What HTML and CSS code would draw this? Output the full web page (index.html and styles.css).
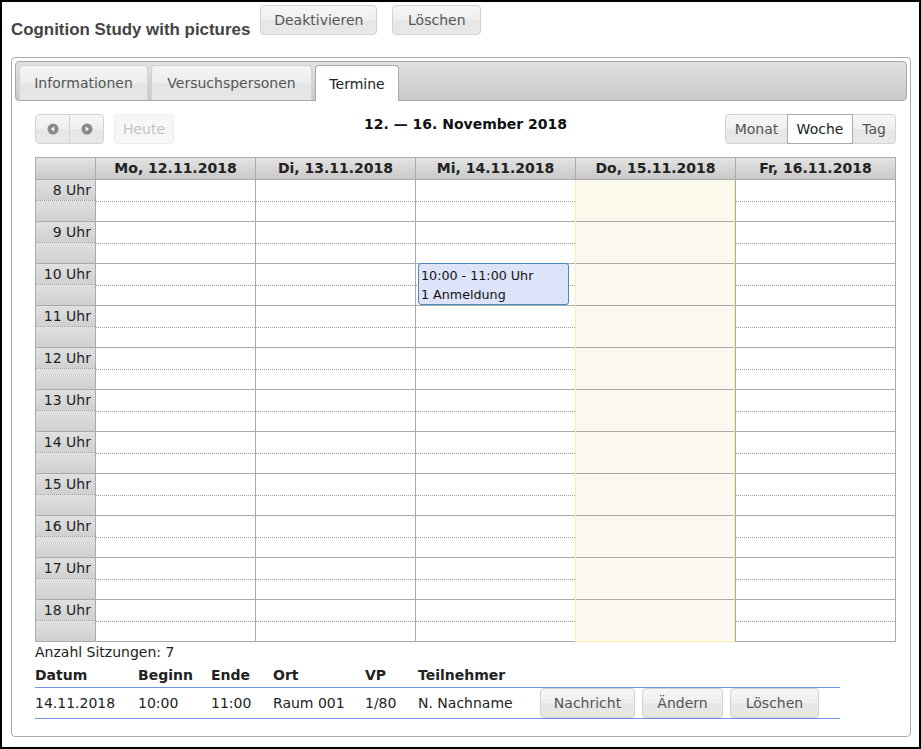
FILE: index.html
```html
<!DOCTYPE html>
<html lang="de">
<head>
<meta charset="utf-8">
<title>Cognition Study with pictures</title>
<link rel="stylesheet" href="styles.css">
</head>
<body>
<div class="frame">
  <header class="page-header">
    <h1 class="study-title">Cognition Study with pictures</h1>
    <div class="header-actions">
      <button class="btn b-deact">Deaktivieren</button>
      <button class="btn b-del">Löschen</button>
    </div>
  </header>

  <div class="tabs">
    <ul class="tab-nav">
      <li class="tab t-info">Informationen</li>
      <li class="tab t-vp">Versuchspersonen</li>
      <li class="tab t-term active">Termine</li>
    </ul>

    <div class="tab-panel">
      <div class="cal-toolbar">
        <div class="tb-left">
          <div class="btn-group">
            <button class="cbtn icon-btn" aria-label="zurück">
              <svg width="12" height="12" viewBox="0 0 12 12"><circle cx="6" cy="6" r="5.5" fill="#8a8a8a"/><path d="M7.3 3.4 L4 6 L7.3 8.6 Z" fill="#fff"/></svg>
            </button>
            <button class="cbtn icon-btn" aria-label="vor">
              <svg width="12" height="12" viewBox="0 0 12 12"><circle cx="6" cy="6" r="5.5" fill="#8a8a8a"/><path d="M4.7 3.4 L8 6 L4.7 8.6 Z" fill="#fff"/></svg>
            </button>
          </div>
          <button class="cbtn disabled">Heute</button>
        </div>
        <h2 class="cal-title">12. — 16. November 2018</h2>
        <div class="tb-right">
          <div class="btn-group">
            <button class="cbtn v-month">Monat</button>
            <button class="cbtn v-week active">Woche</button>
            <button class="cbtn v-day">Tag</button>
          </div>
        </div>
      </div>

      <div class="cal">
        <div class="cal-head">
          <div class="axis-head"></div>
          <div class="day-head">Mo, 12.11.2018</div>
          <div class="day-head">Di, 13.11.2018</div>
          <div class="day-head">Mi, 14.11.2018</div>
          <div class="day-head">Do, 15.11.2018</div>
          <div class="day-head">Fr, 16.11.2018</div>
        </div>
        <div class="cal-body">
          <div class="axis-col">
            <div class="axis-hour"><div class="lbl">8 Uhr</div><div class="blank"></div></div>
            <div class="axis-hour"><div class="lbl">9 Uhr</div><div class="blank"></div></div>
            <div class="axis-hour"><div class="lbl">10 Uhr</div><div class="blank"></div></div>
            <div class="axis-hour"><div class="lbl">11 Uhr</div><div class="blank"></div></div>
            <div class="axis-hour"><div class="lbl">12 Uhr</div><div class="blank"></div></div>
            <div class="axis-hour"><div class="lbl">13 Uhr</div><div class="blank"></div></div>
            <div class="axis-hour"><div class="lbl">14 Uhr</div><div class="blank"></div></div>
            <div class="axis-hour"><div class="lbl">15 Uhr</div><div class="blank"></div></div>
            <div class="axis-hour"><div class="lbl">16 Uhr</div><div class="blank"></div></div>
            <div class="axis-hour"><div class="lbl">17 Uhr</div><div class="blank"></div></div>
            <div class="axis-hour"><div class="lbl">18 Uhr</div><div class="blank"></div></div>
          </div>
          <div class="day-col">
            <div class="hr"></div><div class="hr"></div><div class="hr"></div><div class="hr"></div><div class="hr"></div><div class="hr"></div><div class="hr"></div><div class="hr"></div><div class="hr"></div><div class="hr"></div><div class="hr"></div>
          </div>
          <div class="day-col">
            <div class="hr"></div><div class="hr"></div><div class="hr"></div><div class="hr"></div><div class="hr"></div><div class="hr"></div><div class="hr"></div><div class="hr"></div><div class="hr"></div><div class="hr"></div><div class="hr"></div>
          </div>
          <div class="day-col">
            <div class="hr"></div><div class="hr"></div><div class="hr"></div><div class="hr"></div><div class="hr"></div><div class="hr"></div><div class="hr"></div><div class="hr"></div><div class="hr"></div><div class="hr"></div><div class="hr"></div>
            <div class="event">
              <div>10:00 - 11:00 Uhr</div>
              <div>1 Anmeldung</div>
            </div>
          </div>
          <div class="day-col today">
            <div class="hr"></div><div class="hr"></div><div class="hr"></div><div class="hr"></div><div class="hr"></div><div class="hr"></div><div class="hr"></div><div class="hr"></div><div class="hr"></div><div class="hr"></div><div class="hr"></div>
          </div>
          <div class="day-col">
            <div class="hr"></div><div class="hr"></div><div class="hr"></div><div class="hr"></div><div class="hr"></div><div class="hr"></div><div class="hr"></div><div class="hr"></div><div class="hr"></div><div class="hr"></div><div class="hr"></div>
          </div>
        </div>
      </div>

      <div class="count">Anzahl Sitzungen: 7</div>

      <table class="sessions">
        <colgroup>
          <col class="c-datum"><col class="c-beginn"><col class="c-ende"><col class="c-ort"><col class="c-vp"><col class="c-teil"><col class="c-act">
        </colgroup>
        <thead>
          <tr><th>Datum</th><th>Beginn</th><th>Ende</th><th>Ort</th><th>VP</th><th>Teilnehmer</th><th></th></tr>
        </thead>
        <tbody>
          <tr>
            <td>14.11.2018</td><td>10:00</td><td>11:00</td><td>Raum 001</td><td>1/80</td><td>N. Nachname</td>
            <td class="actions"><button class="btn b-msg">Nachricht</button><button class="btn b-edit">Ändern</button><button class="btn b-del">Löschen</button></td>
          </tr>
        </tbody>
      </table>
    </div>
  </div>
</div>
</body>
</html>
```

FILE: styles.css
```css
* { box-sizing: border-box; }

html, body {
  margin: 0;
  padding: 0;
  background: #fff;
}

body {
  font-family: "DejaVu Sans", Verdana, sans-serif;
  font-size: 14px;
  color: #222;
}

.frame {
  width: 921px;
  height: 749px;
  border: 2px solid #000;
  overflow: hidden;
}

/* ---------- page header ---------- */
.page-header {
  display: flex;
  align-items: flex-start;
  height: 55px;
  padding: 3px 0 0 9px;
}

.study-title {
  margin: 16px 0 0;
  font: bold 16.9px/18px "Liberation Sans", Arial, sans-serif;
  color: #444;
}

.header-actions {
  display: flex;
  gap: 15px;
  margin-left: 10px;
}

.btn {
  height: 30px;
  padding: 0;
  border: 1px solid #d3d3d3;
  border-radius: 4px;
  background: linear-gradient(#f6f6f6 0%, #efefef 50%, #e6e6e6 52%, #e8e8e8 100%);
  color: #555;
  font: 14px "DejaVu Sans", Verdana, sans-serif;
  text-align: center;
}

.b-deact { width: 117px; }
.b-del { width: 89px; }
.b-msg { width: 95px; }
.b-edit { width: 81px; }

/* ---------- tabs ---------- */
.tabs {
  margin-left: 9px;
  width: 900px;
  height: 680px;
  border: 1px solid #aaa;
  border-radius: 4px;
  padding: 3px;
}

.tab-nav {
  display: flex;
  align-items: flex-start;
  list-style: none;
  margin: 0;
  padding: 3px 3px 0;
  height: 40px;
  border: 1px solid #aaa;
  border-radius: 4px;
  background: linear-gradient(#e2e2e2, #c8c8c8);
}

.tab {
  display: flex;
  align-items: center;
  justify-content: center;
  height: 35px;
  margin-right: 3px;
  padding: 0;
  border: 1px solid #d3d3d3;
  border-bottom: 0;
  border-radius: 4px 4px 0 0;
  background: linear-gradient(#f4f4f4 0%, #ededed 50%, #e4e4e4 52%, #e6e6e6 100%);
  color: #555;
}

.t-info { width: 129px; }
.t-vp { width: 161px; }
.t-term { width: 84px; }

.tab.active {
  height: 36px;
  margin-bottom: -1px;
  background: #fff;
  border-color: #aaa;
  color: #212121;
}

.tab-panel {
  padding: 13px 11px 0 20px;
}

/* ---------- calendar toolbar ---------- */
.cal-toolbar {
  display: grid;
  grid-template-columns: 1fr auto 1fr;
  height: 30px;
  margin-bottom: 13px;
}

.tb-left {
  display: flex;
  align-items: flex-start;
}

.tb-right {
  justify-self: end;
}

.btn-group {
  display: flex;
}

.cbtn {
  height: 30px;
  padding: 0;
  border: 1px solid #d3d3d3;
  border-radius: 0;
  background: linear-gradient(#f6f6f6 0%, #efefef 50%, #e6e6e6 52%, #e8e8e8 100%);
  color: #555;
  font: 14px "DejaVu Sans", Verdana, sans-serif;
  text-align: center;
}

.btn-group .cbtn + .cbtn { margin-left: -1px; }
.btn-group .cbtn:first-child { border-radius: 4px 0 0 4px; }
.btn-group .cbtn:last-child { border-radius: 0 4px 4px 0; }

.icon-btn {
  width: 35px;
  display: flex;
  align-items: center;
  justify-content: center;
}

.cbtn.disabled {
  margin-left: 10px;
  width: 60px;
  border-radius: 4px;
  border-color: #ececec;
  background: #f7f7f7;
  color: #c3c3c3;
}

.v-month { width: 63px; }
.v-week { width: 66px; }
.v-day { width: 44px; }

.cbtn.active {
  position: relative;
  background: #fff;
  border-color: #aaa;
  color: #212121;
}

.cal-title {
  margin: 0;
  padding-top: 2px;
  font-size: 14px;
  line-height: 17px;
  font-weight: bold;
  color: #111;
}

/* ---------- calendar grid ---------- */
.cal {
  width: 861px;
  border: 1px solid #aaa;
  border-bottom: 0;
}

.cal-head {
  display: flex;
  height: 22px;
  border-bottom: 1px solid #aaa;
  background: linear-gradient(#e3e3e3, #c9c9c9);
}

.axis-head {
  width: 59px;
}

.day-head {
  width: 160px;
  border-left: 1px solid #aaa;
  text-align: center;
  font-weight: bold;
  line-height: 21px;
  color: #222;
}

.cal-body {
  display: flex;
}

.axis-col {
  width: 59px;
}

.axis-hour {
  height: 42px;
  border-bottom: 1px solid #aaa;
}

.axis-hour .lbl {
  height: 21px;
  padding-right: 4px;
  border-bottom: 1px dotted #a0a0a0;
  text-align: right;
  line-height: 20px;
  color: #222;
  background: linear-gradient(#e0e0e0, #d0d0d0);
}

.axis-hour .blank {
  height: 20px;
  background: linear-gradient(#e0e0e0, #d0d0d0);
}

.day-col {
  position: relative;
  width: 160px;
  border-left: 1px solid #aaa;
}

.hr {
  height: 42px;
  border-bottom: 1px solid #aaa;
}

.hr::before {
  content: "";
  display: block;
  height: 21px;
  border-bottom: 1px dotted #a0a0a0;
}

.day-col.today {
  border-left-color: #fcefa1;
  border-right: 1px solid #fcefa1;
  background: linear-gradient(#fbf8ec, #fbf9f0);
}

.today .hr {
  border-bottom-color: #a9a9a9;
}

.today .hr::before {
  border-bottom: 0;
  height: 21px;
}

.today .hr:last-child {
  border-bottom-color: #fcefa1;
}

.event {
  position: absolute;
  top: 83px;
  left: 2px;
  width: 151px;
  height: 42px;
  padding: 2px 0 0 2px;
  border: 1px solid #4b8ab8;
  border-radius: 3px;
  background: #dde3f8;
  font-size: 12.7px;
  line-height: 19px;
  color: #111;
}

/* ---------- sessions list ---------- */
.count {
  margin-top: 2px;
  line-height: 17px;
  color: #222;
}

.sessions {
  width: 805px;
  table-layout: fixed;
  border-collapse: collapse;
}

.c-datum { width: 103px; }
.c-beginn { width: 73px; }
.c-ende { width: 62px; }
.c-ort { width: 92px; }
.c-vp { width: 53px; }
.c-teil { width: 122px; }
.c-act { width: 300px; }

.sessions th {
  padding: 6px 0 3px;
  text-align: left;
  font-weight: bold;
  line-height: 17px;
  color: #222;
  border-bottom: 1px solid #6f93e8;
}

.sessions td {
  height: 30px;
  padding: 0;
  vertical-align: middle;
  line-height: 17px;
  color: #222;
  border-bottom: 1px solid #6f93e8;
  white-space: nowrap;
}

.sessions td.actions {
  line-height: 0;
  font-size: 0;
}

.actions .btn {
  vertical-align: top;
  margin-right: 7px;
}
```
